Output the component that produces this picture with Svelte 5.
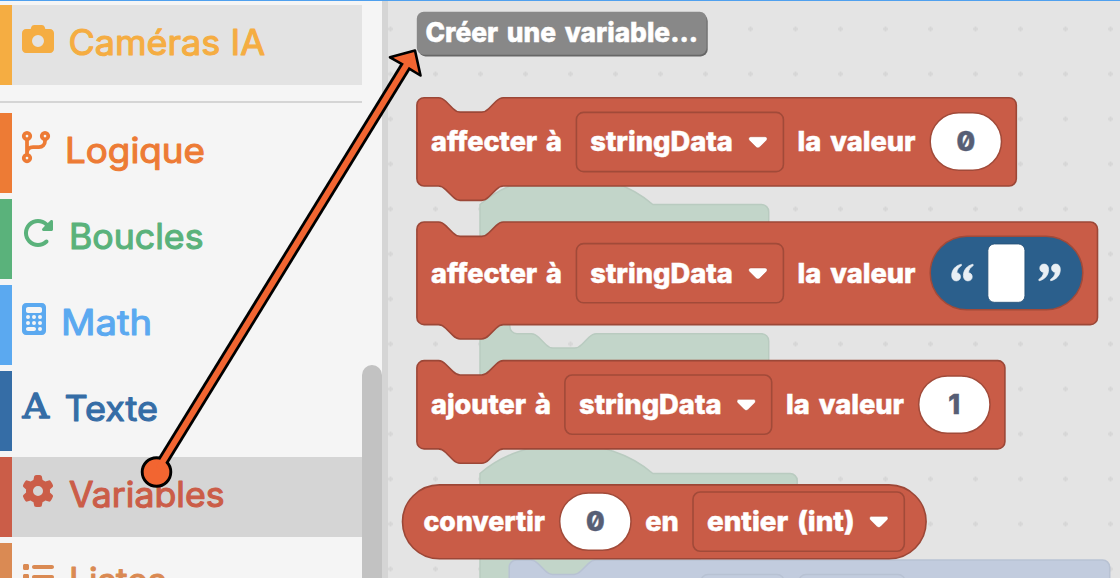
<script>
  const icons = {
    camera: { d: 'M149.1 64.8L138.7 96H64C28.7 96 0 124.7 0 160V416c0 35.3 28.7 64 64 64H448c35.3 0 64-28.7 64-64V160c0-35.3-28.7-64-64-64H373.3L362.9 64.8C356.4 45.2 338.1 32 317.4 32H194.6c-20.7 0-39 13.2-45.5 32.8zM256 192a96 96 0 1 1 0 192 96 96 0 1 1 0-192z' },
    rotate: { d: 'M463.5 224H472c13.3 0 24-10.7 24-24V72c0-9.7-5.8-18.5-14.8-22.2s-19.3-1.7-26.2 5.2L413.4 96.6c-87.6-86.5-228.7-86.2-315.8 1c-87.5 87.5-87.5 229.3 0 316.8s229.3 87.5 316.8 0c12.5-12.5 12.5-32.8 0-45.3s-32.8-12.5-45.3 0c-62.5 62.5-163.8 62.5-226.3 0s-62.5-163.8 0-226.3c62.2-62.2 162.7-62.5 225.3-1L327 183c-6.9 6.9-8.9 17.2-5.2 26.2s12.5 14.8 22.2 14.8H463.5z' },
    calc: { d: 'M64 0C28.7 0 0 28.7 0 64V448c0 35.3 28.7 64 64 64H320c35.3 0 64-28.7 64-64V64c0-35.3-28.7-64-64-64H64zM96 64H288c17.7 0 32 14.3 32 32v32c0 17.7-14.3 32-32 32H96c-17.7 0-32-14.3-32-32V96c0-17.7 14.3-32 32-32zm32 160a32 32 0 1 1 -64 0 32 32 0 1 1 64 0zM96 352a32 32 0 1 1 0-64 32 32 0 1 1 0 64zM64 416c0-17.7 14.3-32 32-32h96c17.7 0 32 14.3 32 32s-14.3 32-32 32H96c-17.7 0-32-14.3-32-32zM192 256a32 32 0 1 1 0-64 32 32 0 1 1 0 64zm32 64a32 32 0 1 1 -64 0 32 32 0 1 1 64 0zm64-64a32 32 0 1 1 0-64 32 32 0 1 1 0 64zm32 64a32 32 0 1 1 -64 0 32 32 0 1 1 64 0zM288 448a32 32 0 1 1 0-64 32 32 0 1 1 0 64z' },
    gear: { d: 'M495.9 166.6c3.2 8.7 .5 18.4-6.4 24.6l-43.3 39.4c1.1 8.3 1.7 16.8 1.7 25.4s-.6 17.1-1.7 25.4l43.3 39.4c6.9 6.2 9.6 15.9 6.4 24.6c-4.4 11.9-9.7 23.3-15.8 34.3l-4.7 8.1c-6.6 11-14 21.4-22.1 31.2c-5.9 7.2-15.7 9.6-24.5 6.8l-55.7-17.7c-13.4 10.3-28.2 18.9-44 25.4l-12.5 57.1c-2 9.1-9 16.3-18.2 17.8c-13.8 2.3-28 3.5-42.5 3.5s-28.7-1.2-42.5-3.5c-9.2-1.5-16.2-8.7-18.2-17.8l-12.5-57.1c-15.8-6.5-30.6-15.1-44-25.4L83.1 425.9c-8.8 2.8-18.6 .3-24.5-6.8c-8.1-9.8-15.5-20.2-22.1-31.2l-4.7-8.1c-6.1-11-11.4-22.4-15.8-34.3c-3.2-8.7-.5-18.4 6.4-24.6l43.3-39.4C64.6 273.1 64 264.6 64 256s.6-17.1 1.7-25.4L22.4 191.2c-6.9-6.2-9.6-15.9-6.4-24.6c4.4-11.9 9.7-23.3 15.8-34.3l4.7-8.1c6.6-11 14-21.4 22.1-31.2c5.9-7.2 15.7-9.6 24.5-6.8l55.7 17.7c13.4-10.3 28.2-18.9 44-25.4l12.5-57.1c2-9.1 9-16.3 18.2-17.8C227.3 1.2 241.5 0 256 0s28.7 1.2 42.5 3.5c9.2 1.5 16.2 8.7 18.2 17.8l12.5 57.1c15.8 6.5 30.6 15.1 44 25.4l55.7-17.7c8.8-2.8 18.6-.3 24.5 6.8c8.1 9.8 15.5 20.2 22.1 31.2l4.7 8.1c6.1 11 11.4 22.4 15.8 34.3zM256 336a80 80 0 1 0 0-160 80 80 0 1 0 0 160z' },
    list: { d: 'M40 48C26.700 48 16 58.700 16 72v48c0 13.300 10.700 24 24 24H88c13.300 0 24-10.700 24-24V72c0-13.300-10.700-24-24-24H40zM192 64c-17.700 0-32 14.300-32 32s14.300 32 32 32H480c17.700 0 32-14.300 32-32s-14.300-32-32-32H192zm0 160c-17.700 0-32 14.300-32 32s14.300 32 32 32H480c17.700 0 32-14.300 32-32s-14.300-32-32-32H192zM40 208c-13.300 0-24 10.700-24 24v48c0 13.300 10.700 24 24 24H88c13.300 0 24-10.700 24-24V232c0-13.300-10.700-24-24-24H40z' }
  };

  // x and w: start and drawn width of each label inside the label column
  const categories = [
    { label: 'Caméras IA', icon: 'camera', color: '#f5ad42', x: 8.5, w: 196.5, state: 'hover' },
    { label: 'Logique', icon: 'branch', color: '#ed7b35', x: 5, w: 140, rule: true },
    { label: 'Boucles', icon: 'rotate', color: '#5ab27b', x: 9, w: 134.5 },
    { label: 'Math', icon: 'calc', color: '#5ba9f0', x: 1, w: 91 },
    { label: 'Texte', icon: 'letter', color: '#356da6', x: 4.5, w: 93.5 },
    { label: 'Variables', icon: 'gear', color: '#cb5d48', x: 9, w: 155.5, state: 'active' },
    { label: 'Listes', icon: 'list', color: '#da8a53', x: 9, w: 97.5 }
  ];

  const S = 1.8;
  const notch = (dir) => {
    const p = dir > 0
      ? [['c', 2, 0, 3, 1, 4, 2], ['l', 4, 4], ['c', 1, 1, 2, 2, 4, 2], ['l', 12, 0], ['c', 2, 0, 3, -1, 4, -2], ['l', 4, -4], ['c', 1, -1, 2, -2, 4, -2]]
      : [['c', -2, 0, -3, 1, -4, 2], ['l', -4, 4], ['c', -1, 1, -2, 2, -4, 2], ['l', -12, 0], ['c', -2, 0, -3, -1, -4, -2], ['l', -4, -4], ['c', -1, -1, -2, -2, -4, -2]];
    return p.map(([k, ...n]) => k + n.map((v) => v * S).join(' ')).join(' ');
  };
  const R = 4 * S;
  const arc = (x, y) => `a${R} ${R} 0 0 1 ${x} ${y}`;
  const statement = (x, y, w, h) =>
    `M${x} ${y + R} ${arc(R, -R)} h${8 * S} ${notch(1)} H${x + w - R} ${arc(R, R)} V${y + h - R} ${arc(-R, R)} H${x + 48 * S} ${notch(-1)} H${x + R} ${arc(-R, -R)} z`;
  const hat = (y) => `M480 ${y} c45 -39.600 127.800 -39.600 172.800 0`;

  const blocks = [
    { x: 416.9, y: 97.7, w: 599.4, h: 88.3 },
    { x: 416.9, y: 222, w: 680.6, h: 102.6 },
    { x: 416.9, y: 360.6, w: 588, h: 88.3 }
  ];
  const menus = [
    { x: 576.4, y: 112.4, w: 207 },
    { x: 576.4, y: 243.6, w: 207 },
    { x: 564.9, y: 375, w: 206.800 },
    { x: 693, y: 492, w: 211.300 }
  ];
  const bubbles = [
    { x: 930.2, y: 112.800, t: '0' },
    { x: 918.7, y: 375.900, t: '1' },
    { x: 559.7, y: 492.900, t: '0' }
  ];
  const words = [
    { t: 'affecter à', x: 431, y: 151, w: 131 },
    { t: 'stringData', x: 590.3, y: 151, w: 142.500 },
    { t: 'la valeur', x: 797.5, y: 151, w: 118 },
    { t: 'affecter à', x: 431, y: 282.700, w: 131 },
    { t: 'stringData', x: 590.3, y: 282.700, w: 142.500 },
    { t: 'la valeur', x: 797.5, y: 282.700, w: 118 },
    { t: 'ajouter à', x: 431, y: 413.600, w: 120 },
    { t: 'stringData', x: 579, y: 413.600, w: 142.500 },
    { t: 'la valeur', x: 786, y: 413.600, w: 118 },
    { t: 'convertir', x: 423.5, y: 530.800, w: 121.500 },
    { t: 'en', x: 645.3, y: 530.800, w: 33.500 },
    { t: 'entier (int)', x: 707, y: 530.800, w: 147.500 }
  ];
</script>

<div class="editor">
  <nav class="toolbox">
    <div class="list">
      {#each categories as c}
        {#if c.rule}<hr />{/if}
        <div class="row {c.state ?? ''}" style:color={c.color}>
          <span class="bar"></span>
          <svg class="icon" viewBox="0 0 512 512">
            {#if c.icon === 'letter'}
              <text class="letter" x="6" y="462" textLength="424" lengthAdjust="spacingAndGlyphs">A</text>
            {:else if c.icon === 'branch'}
              <g class="strokes">
                <circle cx="80" cy="80" r="52" />
                <circle cx="368" cy="80" r="52" />
                <circle cx="80" cy="432" r="52" />
                <path d="M80 140V372M80 352C80 296 120 256 176 256H272C328 256 368 216 368 160V140" />
              </g>
            {:else}
              <path d={icons[c.icon].d} fill-rule="evenodd" />
            {/if}
          </svg>
          <svg class="label">
            <text x={c.x} y="50.200" textLength={c.w} lengthAdjust="spacingAndGlyphs">{c.label}</text>
          </svg>
        </div>
      {/each}
    </div>
    <div class="track"><div class="thumb"></div></div>
  </nav>
  <div class="divider"></div>
  <main>
    <svg viewBox="388 0 732 578" width="732" height="578">
      <defs>
        <pattern id="grid" x="368" y="6.500" width="45" height="45" patternUnits="userSpaceOnUse">
          <path d="M20 22.500h5M22.500 20v5" stroke="#d6d6d6" stroke-width="1.800" />
        </pattern>
      </defs>
      <rect x="388" y="0" width="732" height="578" fill="url(#grid)" />

      <g class="green">
        <path d="{hat(204.500)} H761.500 {arc(R, R)} V290 H517 a{R} {R} 0 0 0 {-R} {R} V326.500 a{R} {R} 0 0 0 {R} {R} h14.400 {notch(1)} H761.500 {arc(R, R)} V410 H480 z" />
        <path d="{hat(473.500)} H790 {arc(R, R)} V540 H700 V590 H480 z" />
      </g>
      <g class="pale">
        <path d="M509.200 {560 + R} {arc(R, -R)} h14.400 {notch(1)} H1102.500 {arc(R, R)} V600 H509.200 z" />
        <rect x="701" y="574.500" width="83" height="40" rx="7" />
        <rect x="799" y="574.500" width="106" height="40" rx="7" />
      </g>

      <rect x="418.500" y="14" width="289.200" height="42.400" rx="7" fill="#676767" />
      <rect x="416.800" y="11.700" width="289.800" height="43" rx="7" fill="#888" />

      <g class="block">
        {#each blocks as b}<path d={statement(b.x, b.y, b.w, b.h)} />{/each}
        <rect x="402.500" y="484.900" width="523.600" height="73.900" rx="36.950" />
      </g>

      {#each menus as m}
        <rect class="menu" x={m.x} y={m.y} width={m.w} height="59.200" rx="7.200" />
        <path class="caret" transform="translate({m.x + m.w - 35} {m.y + 24.300})" d="M2.500 0H16.500c2.200 0 3 2.200 1.500 3.800L11.500 10.300c-1.200 1.200-2.800 1.200-4 0L1 3.800C-.5 2.200 .3 0 2.500 0z" />
      {/each}

      {#each bubbles as b}
        <rect class="bubble" x={b.x} y={b.y} width="71.300" height="57.400" rx="28.700" />
        <text class="digit" x={b.x + 35.600} y={b.y + 38}>{b.t}</text>
      {/each}

      <rect x="930.200" y="236.300" width="152.600" height="73.500" rx="36.750" fill="#2b5f8c" stroke="#a14a39" stroke-width="1.500" />
      <rect x="987.900" y="244" width="37" height="58.300" rx="6.500" fill="#fff" stroke="#244f75" stroke-width=".8" />
      <g class="quotes">
        <path id="q" d="M961.300 264.200c-6 1.400-9.600 5.800-9.600 11.400 0 3.300 1.800 5.300 4.500 5.300 2.500 0 4.300-1.700 4.300-4.100 0-2.300-1.500-3.900-3.700-4.100 .2-3 1.900-5.400 4.700-7.100z" />
        <use href="#q" x="11.700" />
        <use href="#q" transform="rotate(180 1006 272.500)" />
        <use href="#q" transform="rotate(180 1006 272.500) translate(11.700 0)" />
      </g>

      {#each words as w}
        <text class="word" x={w.x} y={w.y} textLength={w.w} lengthAdjust="spacingAndGlyphs">{w.t}</text>
      {/each}
      <text class="word" x="425.500" y="41.800" textLength="272.500" lengthAdjust="spacingAndGlyphs">Créer une variable...</text>
    </svg>
  </main>

  <svg class="pointer" viewBox="0 0 1120 578">
    <path d="M156.500 471.500L405.500 66.500" stroke="#000" stroke-width="11.600" />
    <circle cx="156.500" cy="472" r="14.300" fill="#f26531" stroke="#000" stroke-width="2.900" />
    <path d="M415 50.500L390 57.300 402 64.200 408.800 68.300 420.500 75.500z" fill="#f26531" stroke="#000" stroke-width="2.600" stroke-linejoin="round" />
    <path d="M158.500 468.200L408 62.500" stroke="#f26531" stroke-width="6" />
  </svg>
</div>

<style>
  .editor {
    position: relative;
    display: flex;
    box-sizing: border-box;
    width: 1120px;
    height: 578px;
    overflow: hidden;
    background: #f5f5f5;
  }
  .editor::after {
    content: '';
    position: absolute;
    inset: 0 0 auto;
    height: 1px;
    background: #4fa0ee;
  }
  .toolbox {
    display: flex;
    width: 382px;
    height: 578px;
    overflow: hidden;
  }
  .list {
    width: 362px;
    padding-top: 5px;
  }
  .row {
    display: grid;
    grid-template-columns: 12px 9.5px 38.5px 1fr;
    height: 80px;
    margin-bottom: 6px;
  }
  .hover {
    background: #e3e3e3;
    margin-bottom: 16px;
  }
  .active {
    background: #d5d5d5;
  }
  hr {
    height: 2px;
    margin: 0 0 10px;
    border: 0;
    background: #d5d5d5;
  }
  .bar {
    background: currentColor;
  }
  .icon {
    grid-column: 3;
    width: 32px;
    height: 32px;
    margin-top: 18px;
    fill: currentColor;
    overflow: visible;
  }
  .strokes {
    fill: none;
    stroke: currentColor;
    stroke-width: 60;
  }
  .letter {
    font: 400 540px 'DejaVu Serif', serif;
    stroke: currentColor;
    stroke-width: 22;
    stroke-linejoin: round;
  }
  .label {
    width: 100%;
    height: 80px;
    overflow: visible;
    font: 400 35px Inter, sans-serif;
    fill: currentColor;
    stroke: currentColor;
    stroke-width: 1.1;
    stroke-linejoin: round;
  }
  .track {
    width: 20px;
    padding-top: 365px;
  }
  .thumb {
    height: 300px;
    border-radius: 10px;
    background: #c2c2c2;
  }
  .divider {
    width: 6px;
    background: #d5d5d5;
  }
  main {
    width: 732px;
    background: #e4e4e4;
  }
  main svg {
    display: block;
  }
  .green {
    fill: #c2d5c9;
    stroke: #b9cbc0;
    stroke-width: 1.5;
  }
  .pale {
    fill: #c2ccde;
    stroke: #b8c2d3;
    stroke-width: 1.5;
  }
  .block {
    fill: #c95c47;
    stroke: #9c4737;
    stroke-width: 1.6;
  }
  .menu {
    fill: none;
    stroke: #a14a39;
    stroke-width: 1.6;
  }
  .caret {
    fill: #fff;
    stroke: #b4513e;
    stroke-width: 0.6;
  }
  .bubble {
    fill: #fff;
    stroke: #a14a39;
    stroke-width: 1.5;
  }
  .quotes {
    fill: #e9eff4;
    stroke: #e9eff4;
    stroke-width: 0.7;
  }
  .word,
  .digit {
    font: 800 27px Inter, sans-serif;
    fill: #fff;
    stroke: #fff;
    stroke-width: 0.5;
    word-spacing: 3px;
  }
  .digit {
    fill: #575e75;
    stroke: #575e75;
    text-anchor: middle;
    font-feature-settings: 'zero';
  }
  .pointer {
    position: absolute;
    inset: 0;
    width: 1120px;
    height: 578px;
    fill: none;
  }
</style>
